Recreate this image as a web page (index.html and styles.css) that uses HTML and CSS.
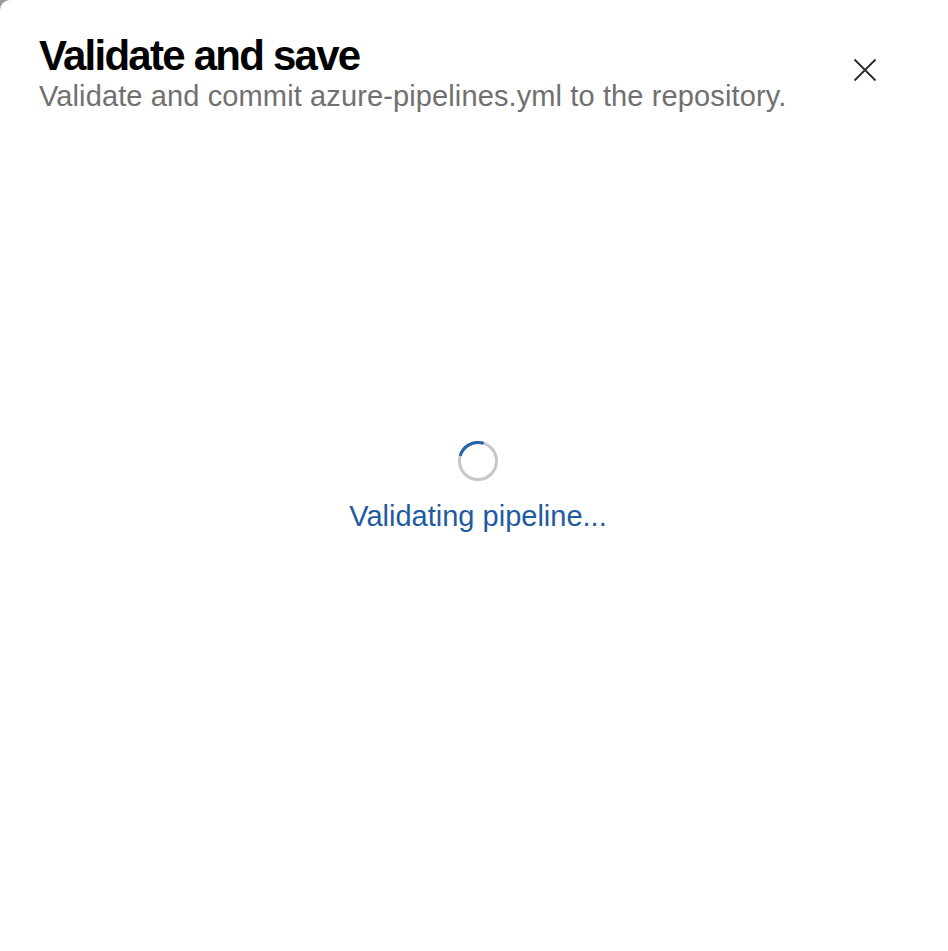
FILE: index.html
```html
<!DOCTYPE html>
<html lang="en">
<head>
<meta charset="utf-8">
<title>Validate and save</title>
<link rel="stylesheet" href="styles.css">
</head>
<body>
<div class="panel">
  <header class="header">
    <div class="titles">
      <h1 class="title">Validate and save</h1>
      <p class="subtitle">Validate and commit azure-pipelines.yml to the repository.</p>
    </div>
    <button class="close" aria-label="Close">
      <svg width="24" height="24" viewBox="0 0 24 24"><path d="M1.5 1.5 L22.5 22.5 M22.5 1.5 L1.5 22.5" stroke="#2b2b2b" stroke-width="1.8" fill="none"/></svg>
    </button>
  </header>
  <main class="content">
    <div class="loading">
      <svg class="spinner" width="40" height="40" viewBox="0 0 40 40">
        <circle cx="20" cy="20" r="18.5" stroke="#c8c8c8" stroke-width="3" fill="none"/>
        <path d="M2.2 14.9 A18.5 18.5 0 0 1 25.7 2.4" stroke="#2a64a8" stroke-width="3" fill="none"/>
      </svg>
      <div class="loading-text">Validating pipeline...</div>
    </div>
  </main>
</div>
</body>
</html>
```
FILE: styles.css
```css
html, body {
  margin: 0;
  padding: 0;
  height: 100%;
  background: #9a9a9a;
}
.panel {
  height: 100%;
  background: #ffffff;
  border-top-left-radius: 10px;
  display: flex;
  flex-direction: column;
  font-family: "Liberation Sans", Arial, sans-serif;
}
.header {
  display: flex;
  justify-content: space-between;
  align-items: flex-start;
  padding: 32px 71px 0 39px;
}
.title {
  margin: 0;
  font-size: 42px;
  font-weight: 700;
  letter-spacing: -1.75px;
  line-height: 47px;
  color: #000;
}
.subtitle {
  margin: 0;
  font-size: 29px;
  letter-spacing: 0.12px;
  line-height: 34px;
  color: #707070;
}
.close {
  border: 0;
  background: none;
  padding: 0;
  margin-top: 26px;
  width: 24px;
  height: 24px;
  cursor: pointer;
}
.content {
  flex: 1;
  display: flex;
  justify-content: center;
  align-items: flex-start;
  padding: 328px 0 0 8px;
}
.loading {
  display: flex;
  flex-direction: column;
  align-items: center;
  gap: 18px;
}
.loading-text {
  font-size: 29px;
  line-height: 34px;
  color: #1f5b9f;
}
```
